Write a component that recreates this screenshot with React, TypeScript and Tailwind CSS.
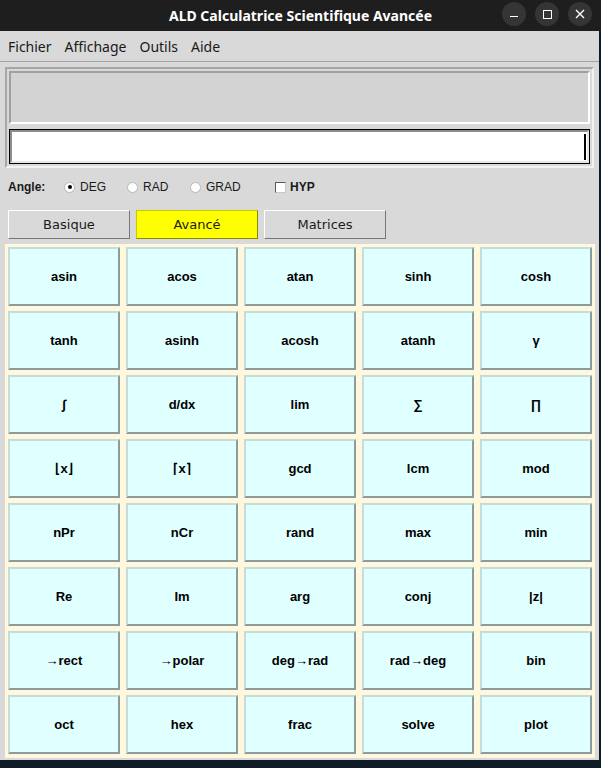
import React from "react";

const rows: string[][] = [
  ["asin", "acos", "atan", "sinh", "cosh"],
  ["tanh", "asinh", "acosh", "atanh", "γ"],
  ["∫", "d/dx", "lim", "∑", "∏"],
  ["⌊x⌋", "⌈x⌉", "gcd", "lcm", "mod"],
  ["nPr", "nCr", "rand", "max", "min"],
  ["Re", "Im", "arg", "conj", "|z|"],
  ["→rect", "→polar", "deg→rad", "rad→deg", "bin"],
  ["oct", "hex", "frac", "solve", "plot"],
];

function Radio({ label, checked }: { label: string; checked?: boolean }) {
  return (
    <div className="flex items-center gap-[5px]">
      <span className="w-[11px] h-[11px] rounded-full bg-white border border-[#b8b8b8] flex items-center justify-center">
        {checked && <span className="w-[4px] h-[4px] rounded-full bg-black" />}
      </span>
      <span>{label}</span>
    </div>
  );
}

export default function App() {
  return (
    <div className="w-[601px] h-[768px] overflow-hidden bg-[#0e1a25] flex flex-col">
      {/* Title bar */}
      <div className="h-[31px] bg-[#1e1e1e] flex items-center relative shrink-0">
        <div className="w-full text-center text-white font-bold text-[14px] font-['Noto_Sans',sans-serif]">
          ALD Calculatrice Scientifique Avancée
        </div>
        <div className="absolute right-[9px] top-[2px] flex gap-[9px]">
          <span className="w-[24px] h-[24px] rounded-full bg-[#353535] flex items-center justify-center">
            <span className="w-[8px] h-[1.5px] bg-white mt-[5px]" />
          </span>
          <span className="w-[24px] h-[24px] rounded-full bg-[#353535] flex items-center justify-center">
            <span className="w-[9px] h-[9px] border-[1.5px] border-white" />
          </span>
          <span className="w-[24px] h-[24px] rounded-full bg-[#353535] flex items-center justify-center">
            <svg width="10" height="10" viewBox="0 0 10 10">
              <path d="M1 1 L9 9 M9 1 L1 9" stroke="white" strokeWidth="1.4" />
            </svg>
          </span>
        </div>
      </div>

      {/* Window body */}
      <div className="w-[599px] h-[729px] bg-[#d9d9d9] flex flex-col shrink-0">
        {/* Menu bar */}
        <div className="h-[31px] shrink-0 flex items-center gap-[13px] px-[8px] text-[14px] text-[#1a1a1a] font-['Noto_Sans',sans-serif] border-b border-[#a3a3a3]">
          <span>Fichier</span>
          <span>Affichage</span>
          <span>Outils</span>
          <span>Aide</span>
        </div>

        {/* Display frame */}
        <div className="mx-[5px] mt-[5px] h-[101px] shrink-0 border-2 border-t-[#a6a6a6] border-l-[#a6a6a6] border-b-[#f2f2f2] border-r-[#f2f2f2] p-[2px] flex flex-col gap-[5px]">
          <div className="h-[53px] bg-[#d3d3d3] border-2 border-t-[#a0a0a0] border-l-[#a0a0a0] border-b-white border-r-white" />
          <div className="h-[35px] border border-black">
            <div className="h-full bg-white border-2 border-t-[#8c8c8c] border-l-[#8c8c8c] border-b-[#e6e6e6] border-r-[#e6e6e6] flex justify-end items-center pr-[1px]">
              <span className="w-[2px] h-[26px] bg-black" />
            </div>
          </div>
        </div>

        {/* Angle row */}
        <div className="h-[36px] mt-[1px] shrink-0 flex items-center px-[8px] text-[12px] text-[#1a1a1a] font-['Liberation_Sans',sans-serif]">
          <span className="font-bold w-[56px]">Angle:</span>
          <div className="w-[63px]">
            <Radio label="DEG" checked />
          </div>
          <div className="w-[63px]">
            <Radio label="RAD" />
          </div>
          <div className="w-[85px]">
            <Radio label="GRAD" />
          </div>
          <div className="flex items-center gap-[4px]">
            <span className="w-[11px] h-[11px] bg-white border border-t-[#5a5a5a] border-l-[#5a5a5a] border-b-[#c8c8c8] border-r-[#c8c8c8]" />
            <span className="font-bold">HYP</span>
          </div>
        </div>

        {/* Tabs */}
        <div className="flex gap-[6px] px-[8px] mt-[5px] shrink-0 text-[13px] font-['DejaVu_Sans',sans-serif] text-[#1a1a1a]">
          <div className="w-[122px] h-[29px] flex items-center justify-center bg-[#d9d9d9] border border-t-white border-l-white border-r-[#777] border-b-[#777]">
            Basique
          </div>
          <div className="w-[122px] h-[29px] flex items-center justify-center bg-[#ffff00] border border-t-[#c9c900] border-l-[#c9c900] border-r-[#8a8a00] border-b-[#8a8a00]">
            Avancé
          </div>
          <div className="w-[122px] h-[29px] flex items-center justify-center bg-[#d9d9d9] border border-t-white border-l-white border-r-[#777] border-b-[#777]">
            Matrices
          </div>
        </div>

        {/* Button grid */}
        <div className="mx-[5px] mt-[5px] w-[590px] shrink-0 bg-[#fff8dc] pt-[3px] pb-[4px] px-[3px] flex flex-col gap-[5px]">
          {rows.map((row, r) => (
            <div key={r} className="grid grid-cols-5 gap-[6px]">
              {row.map((label) => (
                <div
                  key={label}
                  className="h-[59px] bg-[#e0ffff] border-2 border-t-[#c4dcdc] border-l-[#c4dcdc] border-b-[#8c9c9c] border-r-[#8c9c9c] flex items-center justify-center font-bold text-[13px] text-black font-['Liberation_Sans',sans-serif]"
                >
                  {label}
                </div>
              ))}
            </div>
          ))}
        </div>
      </div>
    </div>
  );
}
